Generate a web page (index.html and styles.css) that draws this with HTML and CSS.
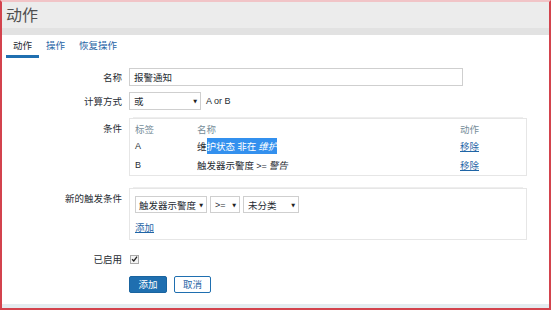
FILE: index.html
```html
<!DOCTYPE html>
<html lang="zh-CN">
<head>
    <meta charset="UTF-8">
    <title>动作</title>
    <link rel="stylesheet" href="styles.css">
</head>
<body>
    <div class="frame">
        <div class="header">
            <h1 class="title">动作</h1>
        </div>

        <div class="tabs">
            <a class="tab tab-active">动作</a>
            <a class="tab">操作</a>
            <a class="tab">恢复操作</a>
        </div>

        <div class="form">
            <!-- 名称 -->
            <div class="row row-name">
                <div class="label">名称</div>
                <div class="field">
                    <div class="input">报警通知</div>
                </div>
            </div>

            <!-- 计算方式 -->
            <div class="row row-calc">
                <div class="label">计算方式</div>
                <div class="field field-inline">
                    <div class="select select-calc"><span>或</span><span class="arrow">▼</span></div>
                    <span class="latin">A or B</span>
                </div>
            </div>

            <!-- 条件 -->
            <div class="row row-cond">
                <div class="label">条件</div>
                <div class="field">
                    <div class="box cond-box">
                        <div class="cond-row cond-head">
                            <div>标签</div>
                            <div>名称</div>
                            <div>动作</div>
                        </div>
                        <div class="cond-row cond-a">
                            <div class="latin">A</div>
                            <div>维<span class="selected">护状态 非在 <i>维护</i></span></div>
                            <div><a class="link">移除</a></div>
                        </div>
                        <div class="cond-row cond-b">
                            <div class="latin">B</div>
                            <div>触发器示警度 <span class="latin">&gt;=</span> <i>警告</i></div>
                            <div><a class="link">移除</a></div>
                        </div>
                    </div>
                </div>
            </div>

            <!-- 新的触发条件 -->
            <div class="row row-new">
                <div class="label">新的触发条件</div>
                <div class="field">
                    <div class="box new-box">
                        <div class="select-group">
                            <div class="select select-trigger"><span>触发器示警度</span><span class="arrow">▼</span></div>
                            <div class="select select-op"><span class="latin">&gt;=</span><span class="arrow">▼</span></div>
                            <div class="select select-sev"><span>未分类</span><span class="arrow">▼</span></div>
                        </div>
                        <a class="link add-link">添加</a>
                    </div>
                </div>
            </div>

            <!-- 已启用 -->
            <div class="row row-enabled">
                <div class="label">已启用</div>
                <div class="field">
                    <span class="checkbox">
                        <svg width="8" height="8" viewBox="0 0 8 8"><path d="M1.2 4.2 L3.2 6.3 L6.9 1.4" fill="none" stroke="#222" stroke-width="1.5"/></svg>
                    </span>
                </div>
            </div>

            <!-- 按钮 -->
            <div class="row row-buttons">
                <div class="label"></div>
                <div class="field field-inline">
                    <button class="btn btn-primary">添加</button>
                    <button class="btn btn-alt">取消</button>
                </div>
            </div>
        </div>

        <div class="footer-band"></div>
    </div>
</body>
</html>
```

FILE: styles.css
```css
* { margin: 0; padding: 0; box-sizing: border-box; }
body {
    font-family: "Noto Sans CJK SC", "Liberation Sans", sans-serif;
    font-size: 9.5px;
    color: #1f2c33;
    background: #fff;
}

.frame {
    width: 551px;
    height: 310px;
    border: 2px solid #d3434d;
    border-top: 2px solid #f1c4c7;
    display: flex;
    flex-direction: column;
    overflow: hidden;
}

.header {
    height: 33px;
    background: #ececec;
    border-bottom: 7px solid #e2e2e2;
    padding: 2px 0 0 4px;
}
.title { font-size: 16px; font-weight: 400; color: #505050; line-height: 20px; }

.tabs {
    height: 23px;
    display: flex;
    align-items: flex-end;
    padding-left: 4px;
}
.tab {
    font-size: 9.5px;
    color: #1f65a6;
    padding: 0 7px 3px 7px;
    line-height: 14px;
    border-bottom: 3px solid transparent;
}
.tab-active { color: #1f2c33; border-bottom-color: #1f6fb0; }

.form { flex: 1; padding-top: 10px; }

.row {
    display: grid;
    grid-template-columns: 120px 1fr;
    column-gap: 7px;
}
.label { text-align: right; line-height: 18px; white-space: nowrap; }
.field-inline { display: flex; align-items: center; gap: 5px; }

.row-name { margin-bottom: 6px; }
.row-calc { margin-bottom: 8px; }
.row-cond { margin-bottom: 12px; }
.row-cond .label { padding-top: 1px; }
.row-new { margin-bottom: 12px; }
.row-new .label { padding-top: 1px; }
.row-enabled { margin-bottom: 10px; align-items: center; }
.row-enabled .label { line-height: 14px; }

.latin { font-family: "Liberation Sans", sans-serif; font-size: 9px; }

.input {
    width: 334px;
    height: 18px;
    border: 1px solid #cfcfcf;
    padding-left: 4px;
    line-height: 16px;
    color: #1f2c33;
}

.select {
    height: 18px;
    border: 1px solid #cfcfcf;
    display: flex;
    align-items: center;
    justify-content: space-between;
    padding: 0 3px 0 4px;
    line-height: 16px;
    white-space: nowrap;
}
.arrow { font-size: 5px; color: #222; font-family: "DejaVu Sans", sans-serif; margin-left: 3px; }
.select-calc { width: 72px; }

.box {
    width: 398px;
    border: 1px solid #e6e6e6;
    box-shadow: 0 -5px 0 -4px #eeeeee;
}

.cond-box { height: 58px; padding: 3px 0 0 5px; }
.cond-row {
    display: grid;
    grid-template-columns: 62px 1fr 66px;
    line-height: 14px;
}
.cond-head { color: #768d99; height: 15px; }
.cond-a { height: 18px; padding-top: 2px; }
.cond-b { height: 19px; padding-top: 3px; }
.cond-row i { font-style: italic; }
.selected { background: #3390ee; color: #fff; padding: 1px 0; }

.link { color: #1f65a6; text-decoration: underline; text-underline-offset: 1px; }

.new-box { height: 52px; padding: 7px 0 0 5px; }
.select-group { display: flex; gap: 3px; }
.select-group .select { height: 17px; }
.select-trigger { width: 72px; padding-left: 3px; }
.select-op { width: 30px; }
.select-sev { width: 56px; }
.add-link { display: block; margin-top: 7px; line-height: 14px; width: 20px; }

.checkbox {
    display: inline-flex;
    width: 9px;
    height: 9px;
    border: 1px solid #aaa;
    align-items: center;
    justify-content: center;
    margin-left: 1px;
    background: #f4f4f4;
}

.btn {
    height: 17px;
    font-family: "Noto Sans CJK SC", sans-serif;
    font-size: 9.5px;
    border-radius: 2px;
    line-height: 15px;
}
.btn-primary {
    width: 38px;
    background: #1f6fb0;
    border: 1px solid #1a649f;
    color: #fff;
}
.btn-alt {
    width: 37px;
    margin-left: 2px;
    background: #fff;
    border: 1px solid #1f6fb0;
    color: #1f65a6;
}

.footer-band { height: 4px; background: #e4ecf0; }
```
